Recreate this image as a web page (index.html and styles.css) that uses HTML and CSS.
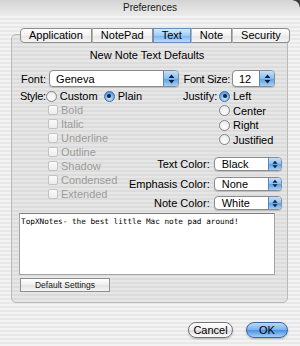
FILE: index.html
```html
<!DOCTYPE html>
<html lang="en">
<head>
    <meta charset="UTF-8">
    <title>Preferences</title>
    <link rel="stylesheet" href="styles.css">
</head>
<body>
    <div class="window">
        <div class="titlebar">Preferences</div>
        <div class="tabs">
            <span class="tab">Application</span>
            <span class="tab">NotePad</span>
            <span class="tab active">Text</span>
            <span class="tab">Note</span>
            <span class="tab">Security</span>
        </div>
        <div class="group">
            <div class="heading">New Note Text Defaults</div>
            <div class="font-row">
                <span class="lbl">Font:</span>
                <span class="popup big font-popup">Geneva<span class="cap"><svg width="7" height="10" viewBox="0 0 7 10"><path d="M3.5 0.5 L6.5 4 H0.5 Z M3.5 9.5 L6.5 6 H0.5 Z" fill="#10213d"/></svg></span></span>
                <span class="lbl size-lbl">Font Size:</span>
                <span class="popup big size-popup">12<span class="cap"><svg width="7" height="10" viewBox="0 0 7 10"><path d="M3.5 0.5 L6.5 4 H0.5 Z M3.5 9.5 L6.5 6 H0.5 Z" fill="#10213d"/></svg></span></span>
            </div>
            <div class="lower">
                <div class="left-col">
                    <div class="row">
                        <span class="style-lbl">Style:</span>
                        <span class="radio"></span><span>Custom</span>
                        <span class="radio on plain"></span><span>Plain</span>
                    </div>
                    <div class="row check"><span class="box"></span>Bold</div>
                    <div class="row check"><span class="box"></span>Italic</div>
                    <div class="row check"><span class="box"></span>Underline</div>
                    <div class="row check"><span class="box"></span>Outline</div>
                    <div class="row check"><span class="box"></span>Shadow</div>
                    <div class="row check"><span class="box"></span>Condensed</div>
                    <div class="row check"><span class="box"></span>Extended</div>
                </div>
                <div class="right-col">
                    <div class="justify">
                        <span class="justify-lbl">Justify:</span>
                        <div class="radios">
                            <div class="jrow"><span class="radio on"></span>Left</div>
                            <div class="jrow"><span class="radio"></span>Center</div>
                            <div class="jrow"><span class="radio"></span>Right</div>
                            <div class="jrow"><span class="radio"></span>Justified</div>
                        </div>
                    </div>
                    <div class="colors">
                        <div class="color-row">
                            <span class="lbl">Text Color:</span>
                            <span class="popup small">Black<span class="cap"><svg width="6" height="9" viewBox="0 0 7 10"><path d="M3.5 0.5 L6.5 4 H0.5 Z M3.5 9.5 L6.5 6 H0.5 Z" fill="#10213d"/></svg></span></span>
                        </div>
                        <div class="color-row">
                            <span class="lbl">Emphasis Color:</span>
                            <span class="popup small">None<span class="cap"><svg width="6" height="9" viewBox="0 0 7 10"><path d="M3.5 0.5 L6.5 4 H0.5 Z M3.5 9.5 L6.5 6 H0.5 Z" fill="#10213d"/></svg></span></span>
                        </div>
                        <div class="color-row">
                            <span class="lbl">Note Color:</span>
                            <span class="popup small">White<span class="cap"><svg width="6" height="9" viewBox="0 0 7 10"><path d="M3.5 0.5 L6.5 4 H0.5 Z M3.5 9.5 L6.5 6 H0.5 Z" fill="#10213d"/></svg></span></span>
                        </div>
                    </div>
                </div>
            </div>
            <div class="sample">TopXNotes- the best little Mac note pad around!</div>
            <div class="default-btn">Default Settings</div>
        </div>
        <div class="footer">
            <span class="pill cancel">Cancel</span>
            <span class="pill ok">OK</span>
        </div>
    </div>
</body>
</html>
```

FILE: styles.css
```css
html, body{
    background: repeating-linear-gradient(#f3f3f3 0 2px, #e8e8e8 2px 4px);
}
body{
    margin: 0;
    font-family: "Liberation Sans", Arial, sans-serif;
    font-size: 11px;
    color: #000;
}
.window{
    width: 300px;
    height: 346px;
    overflow: hidden;
}
.titlebar{
    height: 16px;
    line-height: 15px;
    text-align: center;
    font-size: 10px;
    color: #1a1a1a;
    background:
        radial-gradient(circle at 0 100%, transparent 6px, #3b3b3b 7px) top right / 7px 7px no-repeat,
        linear-gradient(#d4d4d4, #ececec);
}
.tabs{
    display: flex;
    margin: 12px 0 0 20px;
    position: relative;
    z-index: 1;
}
.tab{
    height: 13px;
    line-height: 13px;
    padding: 0 8px;
    border: 1px solid #8e8e8e;
    border-left: 1px solid #b4b4b4;
    background: linear-gradient(#ffffff, #f1f1f1 50%, #e4e4e4 51%, #f6f6f6);
}
.tab:first-child{
    border-left-color: #8e8e8e;
    border-radius: 4px 0 0 4px;
}
.tab:last-child{
    border-radius: 0 4px 4px 0;
}
.tab.active{
    background: linear-gradient(#d2e9fd, #9fcdf6 50%, #76b4ee 51%, #b9dcfb);
    border-color: #6b8fbd;
}
.group{
    margin: -9px 12px 0 11px;
    padding: 14px 12px 10px 7px;
    border: 1px solid #b9b9b9;
    border-radius: 5px;
    background: rgba(0, 0, 0, 0.05);
}
.heading{
    text-align: center;
    line-height: 13px;
}
.font-row{
    display: flex;
    align-items: center;
    height: 17px;
    margin-top: 8px;
}
.lbl{
    white-space: nowrap;
}
.font-row .lbl:first-child{
    margin: 0 3px 0 2px;
}
.size-lbl{
    margin-left: auto;
    margin-right: 2px;
    letter-spacing: -0.3px;
}
.popup{
    box-sizing: border-box;
    display: flex;
    align-items: center;
    background: #fff;
    border: 1px solid #8c8c8c;
    border-radius: 4px;
    padding-left: 6px;
    box-shadow: 0 1px 1px rgba(0, 0, 0, 0.15);
}
.popup.big{
    height: 17px;
}
.font-popup{
    width: 130px;
}
.size-popup{
    width: 43px;
}
.popup.small{
    height: 14px;
    width: 68px;
    padding-left: 7px;
}
.cap{
    margin-left: auto;
    align-self: stretch;
    width: 14px;
    display: flex;
    align-items: center;
    justify-content: center;
    border-left: 1px solid #5d86b8;
    border-radius: 0 3px 3px 0;
    background: linear-gradient(#c4e0fb, #88bff2 50%, #5d9fe8 51%, #a3d0f8);
}
.small .cap{
    width: 12px;
}
.lower{
    display: flex;
    margin-top: 2px;
}
.left-col{
    width: 110px;
    flex-shrink: 0;
}
.row{
    display: flex;
    align-items: center;
    height: 14px;
    white-space: nowrap;
}
.style-lbl{
    width: 28px;
    padding-left: 1px;
    letter-spacing: -0.3px;
}
.radio{
    box-sizing: border-box;
    width: 11px;
    height: 11px;
    margin-right: 3px;
    border: 1px solid #858585;
    border-radius: 50%;
    background: radial-gradient(circle at 50% 70%, #ffffff, #e4e4e4);
    position: relative;
    flex-shrink: 0;
}
.radio.on{
    border-color: #3f6ea8;
    background: radial-gradient(circle at 50% 75%, #c9e5ff, #6eaaea 60%, #4a88d4);
}
.radio.on::after{
    content: "";
    position: absolute;
    left: 2.5px;
    top: 2.5px;
    width: 4px;
    height: 4px;
    border-radius: 50%;
    background: #14223a;
}
.radio.plain{
    margin-left: 6px;
}
.check{
    color: #9c9c9c;
    padding-left: 29px;
}
.box{
    box-sizing: border-box;
    width: 10px;
    height: 10px;
    margin-right: 3px;
    border: 1px solid #c2c2c2;
    border-radius: 2px;
    background: linear-gradient(#fbfbfb, #ececec);
}
.right-col{
    flex: 1;
}
.justify{
    display: flex;
    margin-left: 54px;
}
.justify-lbl{
    width: 36px;
    line-height: 14.5px;
}
.jrow{
    display: flex;
    align-items: center;
    height: 14.5px;
}
.colors{
    display: flex;
    flex-direction: column;
    gap: 5.5px;
    margin-top: 10px;
}
.color-row{
    display: flex;
    justify-content: flex-end;
    align-items: center;
    height: 14px;
}
.color-row .lbl{
    margin-right: 4px;
}
.sample{
    box-sizing: border-box;
    height: 62px;
    margin-top: 3px;
    padding: 3px 1px;
    background: #fff;
    border: 1px solid #a4a4a4;
    border-top-color: #7e7e7e;
    font-family: "DejaVu Sans Mono", monospace;
    font-size: 7.7px;
    line-height: 10px;
}
.default-btn{
    box-sizing: border-box;
    width: 90px;
    height: 14px;
    margin: 3px 0 0 1px;
    line-height: 12px;
    text-align: center;
    font-size: 8.5px;
    color: #1a1a1a;
    border: 1px solid #8e8e8e;
    background: linear-gradient(#ffffff, #eeeeee 50%, #e2e2e2 51%, #f4f4f4);
}
.footer{
    display: flex;
    justify-content: flex-end;
    gap: 13px;
    margin-top: 19px;
    padding-right: 12px;
}
.pill{
    box-sizing: border-box;
    height: 16px;
    line-height: 14px;
    text-align: center;
    border-radius: 8px;
    font-size: 11px;
    box-shadow: 0 1px 2px rgba(0, 0, 0, 0.25);
}
.cancel{
    width: 45px;
    border: 1px solid #777;
    background: linear-gradient(#ffffff, #f0f0f0 50%, #dcdcdc 51%, #fafafa);
}
.ok{
    width: 42px;
    border: 1px solid #3a66a3;
    background: linear-gradient(#b7dafa, #77b1ee 50%, #4a8ee2 51%, #9fd0fb);
}
```
